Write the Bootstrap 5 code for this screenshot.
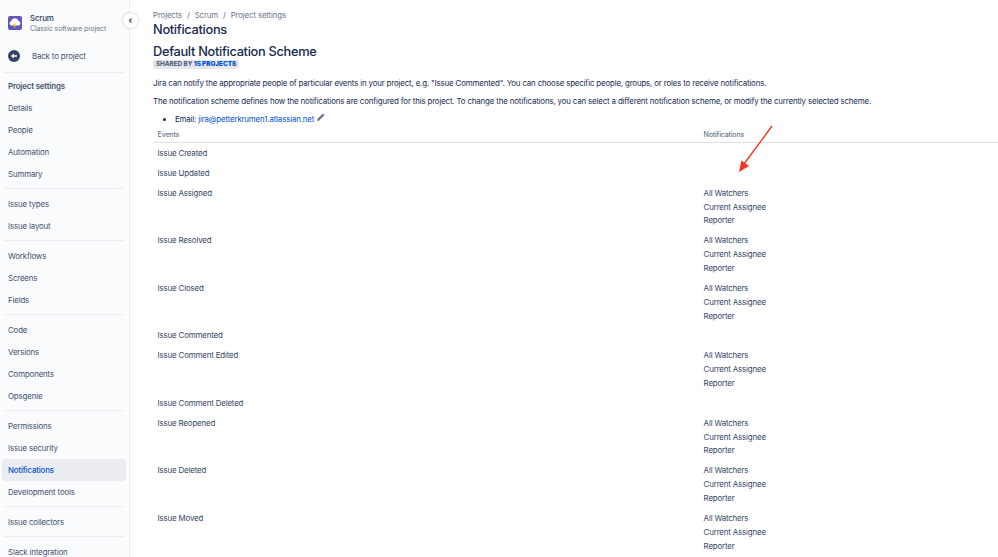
<!DOCTYPE html>
<html lang="en">
<head>
    <meta charset="UTF-8">
    <title>Notifications</title>
    <link href="https://cdn.jsdelivr.net/npm/bootstrap@5.3.0/dist/css/bootstrap.min.css" rel="stylesheet">
    <style>
        html, body {
            height: 557px;
            overflow: hidden;
        }
        body {
            font-family: Inter, "Liberation Sans", sans-serif;
            font-size: 7.9px;
            letter-spacing: -.16px;
            line-height: 14px;
            color: #172b4d;
            background-color: #fff;
        }
        .page-wrap {
            height: 557px;
        }
        .side-panel {
            width: 130px;
            flex: none;
            height: 557px;
            overflow: hidden;
            background-color: #fafbfc;
            border-right: 1px solid #ebecf0;
            padding: 0 3px 0 2px;
            color: #42526e;
        }
        .proj-head {
            height: 44px;
            padding: 12px 0 0 6px;
        }
        .proj-name {
            font-weight: 500;
            color: #253858;
            line-height: 12px;
        }
        .proj-type {
            font-size: 6.9px;
            letter-spacing: -.1px;
            color: #6b778c;
            line-height: 10px;
        }
        .back-row {
            height: 24px;
            padding-left: 6px;
        }
        .side-rule {
            border-top: 1px solid #ebecf0;
            margin: 3.5px 1px;
        }
        .side-title {
            font-weight: 600;
            height: 20.5px;
            line-height: 20.5px;
            padding-left: 6px;
            color: #42526e;
        }
        .side-link {
            display: block;
            height: 22px;
            line-height: 22px;
            padding-left: 6px;
            border-radius: 3px;
            color: #42526e;
            text-decoration: none;
        }
        .side-link.picked {
            background-color: #ebecf0;
            color: #0052cc;
            font-weight: 500;
        }
        .collapse-btn {
            position: absolute;
            left: 123px;
            top: 12.5px;
            width: 15px;
            height: 15px;
            background-color: #fff;
            border-radius: 50%;
            box-shadow: 0 0 3px rgba(9, 30, 66, .25);
        }
        .main-area {
            flex: 1;
            min-width: 0;
            padding: 9px 0 0 23px;
        }
        .crumbs {
            --bs-breadcrumb-divider-color: #6b778c;
            --bs-breadcrumb-item-padding-x: 5px;
            --bs-breadcrumb-margin-bottom: 0;
            line-height: 12px;
            color: #6b778c;
        }
        .crumbs a {
            color: #6b778c;
            text-decoration: none;
        }
        .page-title {
            font-size: 12.8px;
            font-weight: 500;
            letter-spacing: -.3px;
            line-height: 15px;
            margin: 1px 0 0;
            color: #172b4d;
        }
        .scheme-title {
            font-size: 12.8px;
            font-weight: 500;
            letter-spacing: -.3px;
            line-height: 15px;
            margin: 7px 0 0;
            color: #172b4d;
        }
        .shared-tag {
            display: block;
            background-color: #e4e6ec;
            border-radius: 2px;
            color: #42526e;
            font-size: 6.3px;
            font-weight: 700;
            letter-spacing: 0;
            line-height: 9px;
            padding: 0 3px;
            margin-top: 1px;
        }
        .shared-tag b {
            color: #0052cc;
        }
        .intro-text {
            margin: 4px 0 0;
            height: 14px;
        }
        .first-intro {
            margin-top: 7px;
        }
        .first-intro + .intro-text {
            margin-top: 3.5px;
        }
        .mail-list {
            margin: 4.5px 0 0;
            padding-left: 22px;
        }
        .mail-list a {
            color: #0052cc;
            text-decoration: none;
        }
        .event-table {
            --bs-table-color: #42526e;
            --bs-table-bg: transparent;
            margin: 2px 0 0;
            width: 845px;
            table-layout: fixed;
        }
        .event-table th {
            font-size: 7px;
            font-weight: 500;
            line-height: 10px;
            color: #6b778c;
            padding: 2px 4.6px 2px;
            border-bottom: 1px solid #dfe1e6;
        }
        .event-table td {
            padding: 3px 4.6px;
            color: #344563;
            line-height: 13.86px;
        }
        .event-table tbody tr:first-child td {
            padding-top: 4px;
        }
        .event-col {
            width: 546px;
        }
        .point-arrow {
            position: absolute;
            left: 730px;
            top: 120px;
        }
    </style>
</head>
<body>
    <div class="d-flex page-wrap position-relative">
        <div class="side-panel">
            <div class="proj-head d-flex gap-2">
                <svg width="14" height="14" viewBox="0 0 14 14" class="flex-shrink-0 mt-1">
                    <rect width="14" height="14" rx="2" fill="#6554c0"/>
                    <path d="M3.2 9.4a2.2 2.2 0 0 1 .2-4.3 3.6 3.6 0 0 1 7 0 2.2 2.2 0 0 1 .4 4.3z" fill="#fff"/>
                    <path d="M7.4 7.4H5.9L5.2 10h1.2l-.4 2.4 2.5-3.4H7z" fill="#ffc400"/>
                </svg>
                <div>
                    <div class="proj-name">Scrum</div>
                    <div class="proj-type">Classic software project</div>
                </div>
            </div>
            <div class="back-row d-flex align-items-center gap-2">
                <svg width="12" height="12" viewBox="0 0 12 12" class="me-1">
                    <circle cx="6" cy="6" r="6" fill="#344563"/>
                    <path d="M2.9 6 6 3.4v1.8h3v1.6H6v1.8z" fill="#fff"/>
                </svg>
                <span>Back to project</span>
            </div>
            <div class="side-rule"></div>
            <div class="side-title">Project settings</div>
            <a class="side-link" href="#">Details</a>
            <a class="side-link" href="#">People</a>
            <a class="side-link" href="#">Automation</a>
            <a class="side-link" href="#">Summary</a>
            <div class="side-rule"></div>
            <a class="side-link" href="#">Issue types</a>
            <a class="side-link" href="#">Issue layout</a>
            <div class="side-rule"></div>
            <a class="side-link" href="#">Workflows</a>
            <a class="side-link" href="#">Screens</a>
            <a class="side-link" href="#">Fields</a>
            <div class="side-rule"></div>
            <a class="side-link" href="#">Code</a>
            <a class="side-link" href="#">Versions</a>
            <a class="side-link" href="#">Components</a>
            <a class="side-link" href="#">Opsgenie</a>
            <div class="side-rule"></div>
            <a class="side-link" href="#">Permissions</a>
            <a class="side-link" href="#">Issue security</a>
            <a class="side-link picked" href="#">Notifications</a>
            <a class="side-link" href="#">Development tools</a>
            <div class="side-rule"></div>
            <a class="side-link" href="#">Issue collectors</a>
            <div class="side-rule"></div>
            <a class="side-link" href="#">Slack integration</a>
        </div>
        <div class="collapse-btn d-flex align-items-center justify-content-center">
            <svg width="7" height="7" viewBox="0 0 7 7"><path d="M4.5 1.5 2.5 3.5l2 2" fill="none" stroke="#42526e" stroke-width="1.2"/></svg>
        </div>
        <div class="main-area">
            <nav>
                <ol class="breadcrumb crumbs">
                    <li class="breadcrumb-item"><a href="#">Projects</a></li>
                    <li class="breadcrumb-item"><a href="#">Scrum</a></li>
                    <li class="breadcrumb-item"><a href="#">Project settings</a></li>
                </ol>
            </nav>
            <h1 class="page-title">Notifications</h1>
            <h2 class="scheme-title">Default Notification Scheme</h2>
            <div class="d-flex"><span class="shared-tag">SHARED BY <b>15 PROJECTS</b></span></div>
            <p class="intro-text first-intro">Jira can notify the appropriate people of particular events in your project, e.g. "Issue Commented". You can choose specific people, groups, or roles to receive notifications.</p>
            <p class="intro-text">The notification scheme defines how the notifications are configured for this project. To change the notifications, you can select a different notification scheme, or modify the currently selected scheme.</p>
            <ul class="mail-list">
                <li>Email: <a href="#">jira@petterkrumen1.atlassian.net</a>
                    <svg width="9" height="9" viewBox="0 0 9 9" class="align-baseline"><path d="M1 8l.5-2.2L6.4.9a.7.7 0 0 1 1 0l.7.7a.7.7 0 0 1 0 1L3.2 7.5z" fill="#6b778c"/></svg>
                </li>
            </ul>
            <table class="table table-borderless event-table">
                <thead>
                    <tr><th class="event-col">Events</th><th>Notifications</th></tr>
                </thead>
                <tbody id="eventRows"></tbody>
            </table>
        </div>
        <svg class="point-arrow" width="50" height="60" viewBox="0 0 50 60">
            <path d="M42 6 14 44" stroke="#f5331e" stroke-width="1.4" fill="none"/>
            <path d="M9 52l2.4-11.5 7.6 5.6z" fill="#f5331e"/>
        </svg>
    </div>

    <script>
        // events with the usual three recipients get the list, the rest stay empty
        const events = [
            ['Issue Created', false],
            ['Issue Updated', false],
            ['Issue Assigned', true],
            ['Issue Resolved', true],
            ['Issue Closed', true],
            ['Issue Commented', false],
            ['Issue Comment Edited', true],
            ['Issue Comment Deleted', false],
            ['Issue Reopened', true],
            ['Issue Deleted', true],
            ['Issue Moved', true]
        ];
        let rowsHtml = '';
        for (const [name, hasList] of events) {
            const who = hasList ? '<div>All Watchers</div><div>Current Assignee</div><div>Reporter</div>' : '&nbsp;';
            rowsHtml += `<tr><td>${name}</td><td>${who}</td></tr>`;
        }
        document.getElementById('eventRows').innerHTML = rowsHtml;
    </script>
    <script src="https://cdn.jsdelivr.net/npm/bootstrap@5.3.0/dist/js/bootstrap.bundle.min.js"></script>
</body>
</html>
